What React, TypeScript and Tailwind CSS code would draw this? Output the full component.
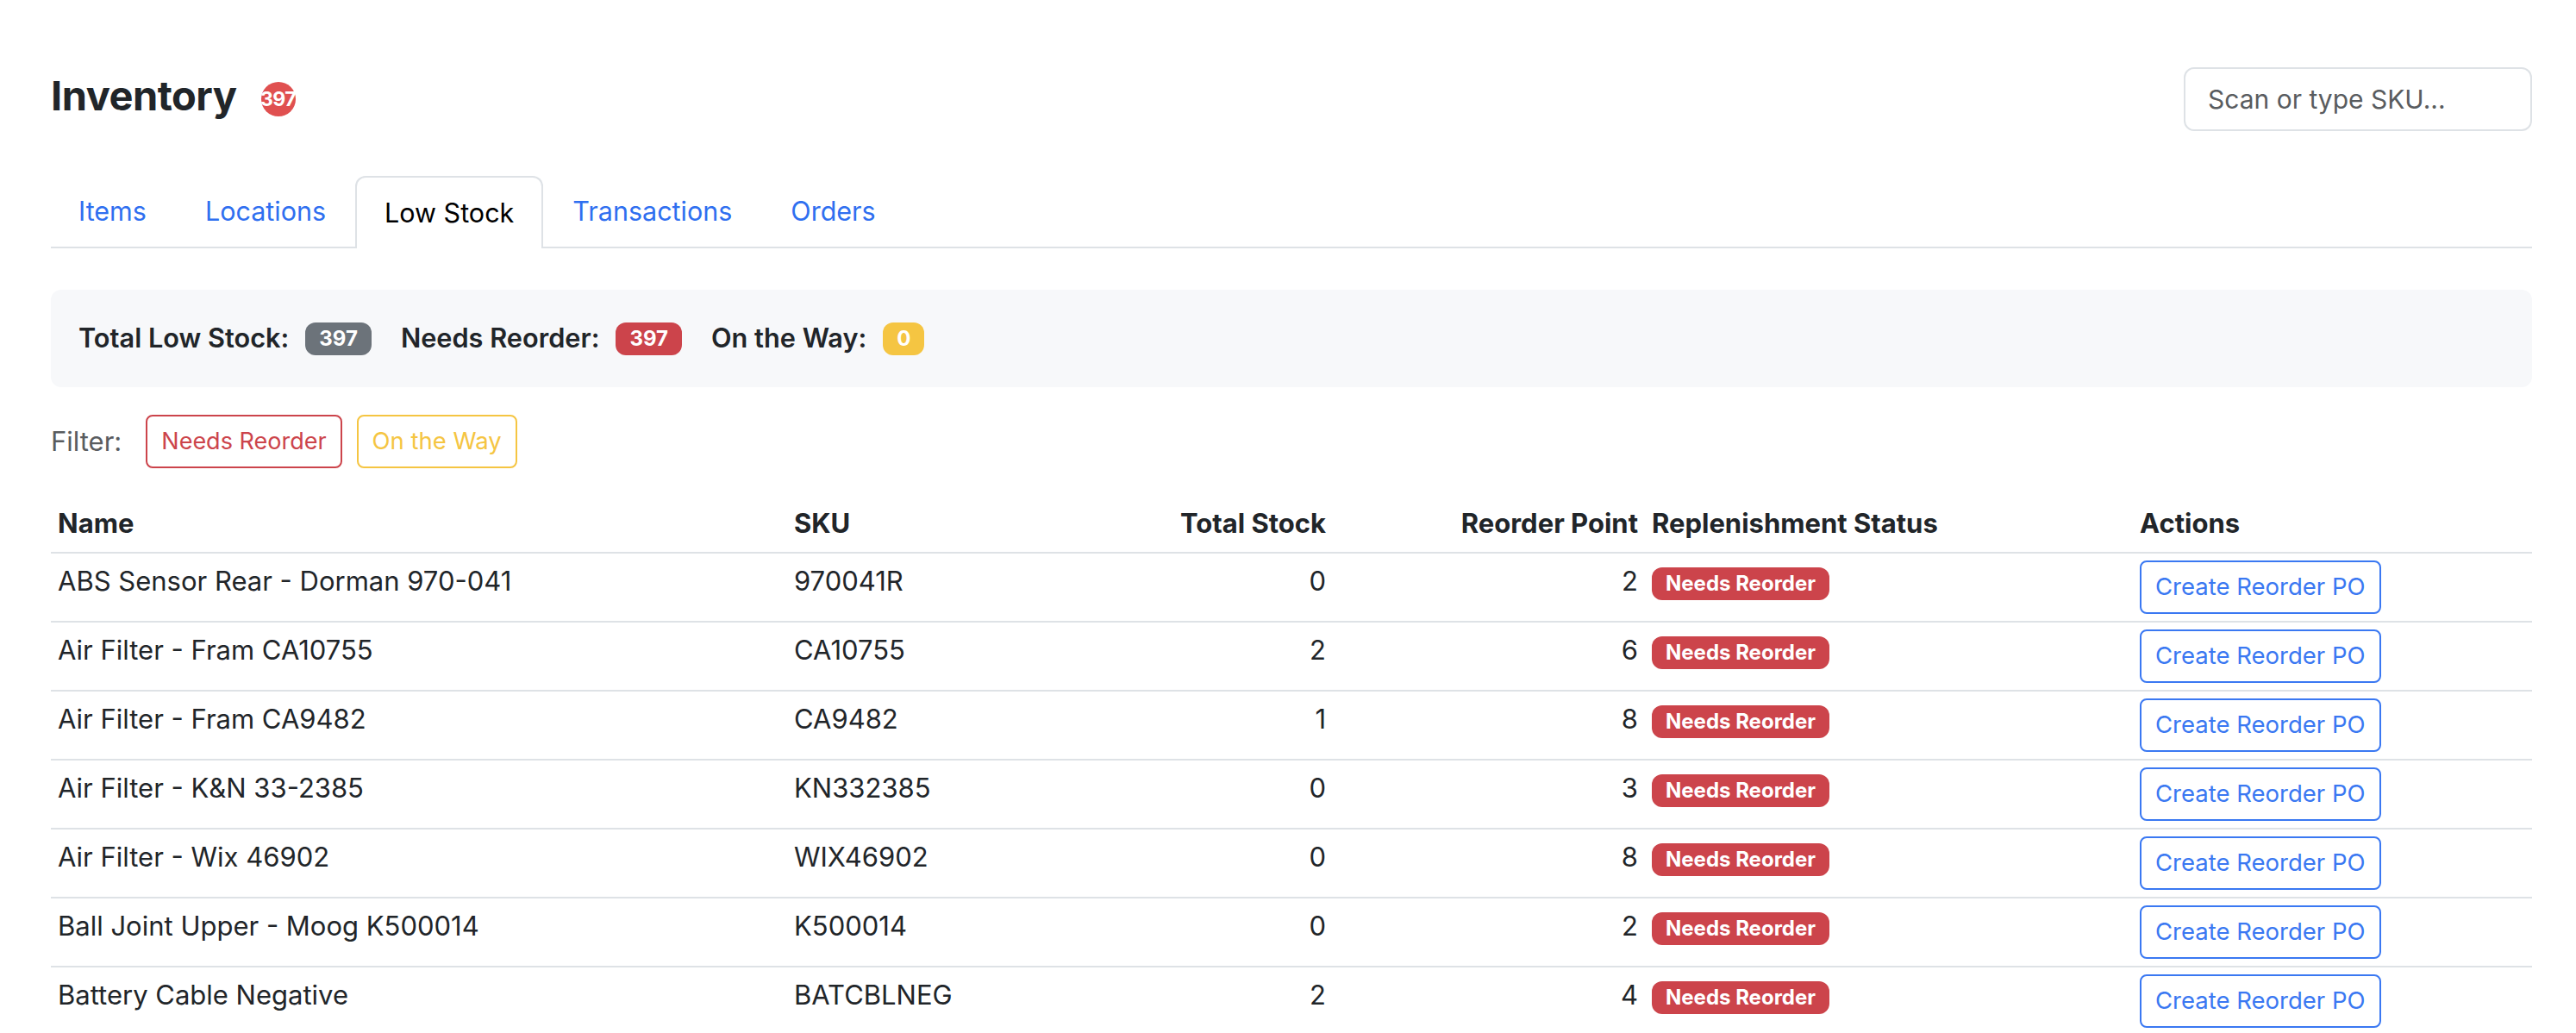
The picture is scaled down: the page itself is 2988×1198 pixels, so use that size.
const rows = [
  { name: "ABS Sensor Rear - Dorman 970-041", sku: "970041R", stock: 0, reorder: 2 },
  { name: "Air Filter - Fram CA10755", sku: "CA10755", stock: 2, reorder: 6 },
  { name: "Air Filter - Fram CA9482", sku: "CA9482", stock: 1, reorder: 8 },
  { name: "Air Filter - K&N 33-2385", sku: "KN332385", stock: 0, reorder: 3 },
  { name: "Air Filter - Wix 46902", sku: "WIX46902", stock: 0, reorder: 8 },
  { name: "Ball Joint Upper - Moog K500014", sku: "K500014", stock: 0, reorder: 2 },
  { name: "Battery Cable Negative", sku: "BATCBLNEG", stock: 2, reorder: 4 },
];

const tabs = ["Items", "Locations", "Low Stock", "Transactions", "Orders"];

function Tabs() {
  return (
    <div className="flex border-b-2 border-[#dee2e6] mt-[52px]">
      {tabs.map((tab) => (
        <div
          key={tab}
          className={
            tab === "Low Stock"
              ? "h-[84px] -mb-[2px] px-[32px] flex items-center text-[30.5px] text-[#000] bg-white border-2 border-b-0 border-[#dee2e6] rounded-t-[12px]"
              : "h-[82px] px-[32px] flex items-center text-[30.5px] text-[#2f6ff0] border-2 border-transparent first:border-l-0"
          }
        >
          {tab}
        </div>
      ))}
    </div>
  );
}

function Summary() {
  return (
    <div className="mt-[48px] h-[113px] bg-[#f7f8fa] rounded-[12px] px-[32px] flex items-center text-[30.7px] font-semibold text-[#212529]">
      <span>Total Low Stock:</span>
      <span className="ml-[19px] mr-[34px] bg-[#6c737a] text-white text-[24px] font-bold leading-none px-[16px] py-[7px] rounded-[12px]">397</span>
      <span>Needs Reorder:</span>
      <span className="ml-[19px] mr-[34px] bg-[#cc444b] text-white text-[24px] font-bold leading-none px-[16px] py-[7px] rounded-[12px]">397</span>
      <span>On the Way:</span>
      <span className="ml-[19px] bg-[#f5c542] text-white text-[24px] font-bold leading-none px-[16px] py-[7px] rounded-[12px]">0</span>
    </div>
  );
}

export default function App() {
  return (
    <div className="min-h-[1198px] bg-white font-['Inter',sans-serif] text-[#212529] pl-[59px] pr-[51px] pt-[78px]">
      <div className="flex items-center justify-between">
        <div className="flex items-center">
          <h1 className="text-[47px] font-bold leading-none tracking-[-0.5px] mb-[10px]">Inventory</h1>
          <div className="ml-[28px] w-[40px] h-[40px] rounded-full bg-[#e05050] flex items-center justify-center">
            <span className="text-white text-[23px] font-bold leading-none tracking-[-0.5px]">397</span>
          </div>
        </div>
        <div className="w-[404px] h-[74px] border-2 border-[#dee2e6] rounded-[12px] px-[26px] flex items-center text-[30px] text-[#595c5f]">
          Scan or type SKU...
        </div>
      </div>

      <Tabs />
      <Summary />

      <div className="mt-[32px] flex items-center h-[62px]">
        <span className="text-[31px] text-[#595c5f] mr-[28px]">Filter:</span>
        <button className="h-[62px] px-[16px] border-2 border-[#cc444b] rounded-[8px] text-[27px] text-[#cc444b] mr-[17px]">Needs Reorder</button>
        <button className="h-[62px] px-[16px] border-2 border-[#f5c542] rounded-[8px] text-[27.5px] text-[#f5c542]">On the Way</button>
      </div>

      <table className="mt-[32px] w-full table-fixed border-collapse text-[31px]">
        <colgroup>
          <col className="w-[854px]" />
          <col className="w-[440px]" />
          <col className="w-[193px]" />
          <col className="w-[362px]" />
          <col className="w-[566px]" />
          <col />
        </colgroup>
        <thead>
          <tr className="border-b-2 border-[#dee2e6] h-[66px]">
            <th className="text-left px-[8px] font-bold">Name</th>
            <th className="text-left px-[8px] font-bold">SKU</th>
            <th className="text-right px-[8px] font-bold whitespace-nowrap">Total Stock</th>
            <th className="text-right px-[8px] font-bold whitespace-nowrap">Reorder Point</th>
            <th className="text-left px-[8px] font-bold whitespace-nowrap">Replenishment Status</th>
            <th className="text-left px-[8px] font-bold">Actions</th>
          </tr>
        </thead>
        <tbody>
          {rows.map((r) => (
            <tr key={r.sku} className="border-b-2 border-[#dee2e6]">
              <td className="px-[8px] py-[8px] align-top leading-[48px] whitespace-nowrap">{r.name}</td>
              <td className="px-[8px] py-[8px] align-top leading-[48px]">{r.sku}</td>
              <td className="px-[8px] py-[8px] align-top leading-[48px] text-right">{r.stock}</td>
              <td className="px-[8px] py-[8px] align-top leading-[48px] text-right">{r.reorder}</td>
              <td className="px-[8px] py-[8px] align-top leading-[48px]">
                <span className="inline-block align-middle bg-[#cc444b] text-white text-[24px] font-bold leading-none px-[16px] py-[7px] rounded-[12px]">Needs Reorder</span>
              </td>
              <td className="px-[8px] py-[8px] align-top">
                <button className="h-[62px] px-[16px] border-2 border-[#3a78f2] rounded-[8px] text-[27.5px] text-[#3a78f2] whitespace-nowrap">Create Reorder PO</button>
              </td>
            </tr>
          ))}
        </tbody>
      </table>
    </div>
  );
}
